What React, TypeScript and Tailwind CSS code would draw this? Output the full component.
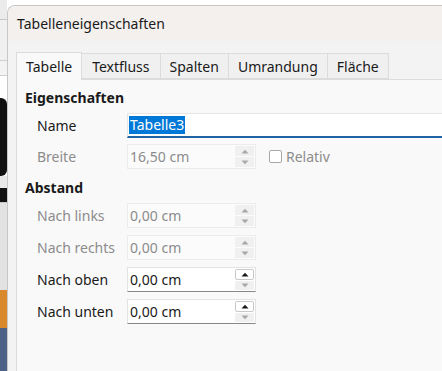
import React from "react";

const font = { fontFamily: '"Noto Sans", "Open Sans", sans-serif' };

function Spinner({ enabled }: { enabled: boolean }) {
  return (
    <div className="flex flex-col w-[20px] h-full py-[1px] pr-[1px] gap-[1px]">
      <div
        className={`flex-1 flex items-center justify-center ${
          enabled ? "bg-white border border-[#c9c9c9] rounded-[2px]" : "bg-[#f0f0f0]"
        }`}
      >
        <svg width="8" height="5" viewBox="0 0 8 5">
          <path d="M0.5 4.5 L4 0.8 L7.5 4.5 Z" fill={enabled ? "#1a1a1a" : "#a8a8a8"} />
        </svg>
      </div>
      <div className="flex-1 flex items-center justify-center bg-[#f0f0f0]">
        <svg width="8" height="5" viewBox="0 0 8 5">
          <path d="M0.5 0.5 L4 4.2 L7.5 0.5 Z" fill="#a8a8a8" />
        </svg>
      </div>
    </div>
  );
}

function SpinField({ label, value, enabled }: { label: string; value: string; enabled: boolean }) {
  return (
    <div className="flex items-center h-[25px]">
      <span className={`w-[90px] text-[14px] ${enabled ? "text-[#1a1a1a]" : "text-[#8c8c8c]"}`}>{label}</span>
      <div
        className={`flex items-stretch w-[129px] h-[25px] border ${
          enabled ? "bg-white border-[#e3e3e3] border-b-[#868686]" : "bg-[#fbfbfb] border-[#ececec]"
        }`}
      >
        <span className={`flex-1 pl-[2px] text-[14px] leading-[23px] ${enabled ? "text-[#1a1a1a]" : "text-[#8c8c8c]"}`}>
          {value}
        </span>
        <Spinner enabled={enabled} />
      </div>
    </div>
  );
}

export default function App() {
  const tabs = ["Tabelle", "Textfluss", "Spalten", "Umrandung", "Fläche"];
  return (
    <div className="w-[442px] h-[371px] flex overflow-hidden bg-white" style={font}>
      {/* background window peeking out on the left */}
      <div className="w-[7px] flex flex-col shrink-0">
        <div className="h-[20px] bg-[#ebebeb] border-b border-[#c4c4c4]" />
        <div className="h-[41px] bg-[#f0f0f0] border-b border-[#cfcfcf]" />
        <div className="h-[15px] bg-[#f3f3f3] border-b border-[#cfcfcf]" />
        <div className="h-[22px] bg-white" />
        <div className="h-[78px] bg-[#111] rounded-r-[6px]" />
        <div className="h-[12px] bg-[#e8e8e8]" />
        <div className="h-[14px] bg-[#111]" />
        <div className="h-[88px] bg-[#e2e2e2] border-t border-[#c8c8c8]" />
        <div className="h-[38px] bg-[#d9892c]" />
        <div className="flex-1 bg-[#4d6286]" />
      </div>

      {/* dialog */}
      <div className="flex-1 flex flex-col mt-[5px] rounded-tl-[8px] border-l border-t border-[#c7c7c7] bg-[#f3f3f3] overflow-hidden">
        <div className="h-[35px] shrink-0 bg-[#f3f0ee] flex items-center pl-[9px] text-[14px] text-[#1a1a1a]">
          Tabelleneigenschaften
        </div>
        <div className="flex-1 flex flex-col pl-[8px] pt-[10px]">
          <div className="flex items-end h-[28px]">
            {tabs.map((t, i) =>
              i === 0 ? (
                <div
                  key={t}
                  className="h-[28px] px-[9px] flex items-center bg-[#f9f9f9] border border-b-0 border-[#dcdcdc] text-[14px] text-[#1a1a1a] relative z-10 -mb-[1px]"
                >
                  {t}
                </div>
              ) : (
                <div
                  key={t}
                  className={`h-[26px] ${t === "Textfluss" ? "px-[10px]" : "px-[9px]"} flex items-center bg-[#f0f0f0] border border-l-0 border-[#dcdcdc] text-[14px] text-[#1a1a1a]`}
                >
                  {t}
                </div>
              )
            )}
          </div>
          <div className="flex-1 bg-[#f9f9f9] border-l border-t border-[#dcdcdc] pl-[8px] pt-[9px] flex flex-col">
            <div className="font-bold text-[14px] text-[#1a1a1a] leading-[18px]">Eigenschaften</div>
            <div className="flex flex-col pl-[12px] mt-[6px] gap-[6px]">
              <div className="flex items-center h-[25px]">
                <span className="w-[90px] text-[14px] text-[#1a1a1a]">Name</span>
                <div className="flex-1 h-[25px] bg-white border border-[#e6e6e6] border-b-2 border-b-[#1f63a6] flex items-center pl-[1px] -mr-[4px]">
                  <span className="bg-[#0078d7] text-white text-[14px] leading-[18px] px-[1px]">Tabelle3</span>
                </div>
              </div>
              <div className="flex items-center h-[25px]">
                <SpinField label="Breite" value="16,50 cm" enabled={false} />
                <div className="flex items-center ml-[13px] gap-[4px]">
                  <div className="w-[13px] h-[13px] border border-[#a8a8a8] rounded-[2px] bg-white" />
                  <span className="text-[14px] text-[#8c8c8c]">Relativ</span>
                </div>
              </div>
            </div>
            <div className="font-bold text-[14px] text-[#1a1a1a] leading-[18px] mt-[10px]">Abstand</div>
            <div className="flex flex-col pl-[12px] mt-[6px] gap-[7px]">
              <SpinField label="Nach links" value="0,00 cm" enabled={false} />
              <SpinField label="Nach rechts" value="0,00 cm" enabled={false} />
              <SpinField label="Nach oben" value="0,00 cm" enabled={true} />
              <SpinField label="Nach unten" value="0,00 cm" enabled={true} />
            </div>
          </div>
        </div>
      </div>
    </div>
  );
}
